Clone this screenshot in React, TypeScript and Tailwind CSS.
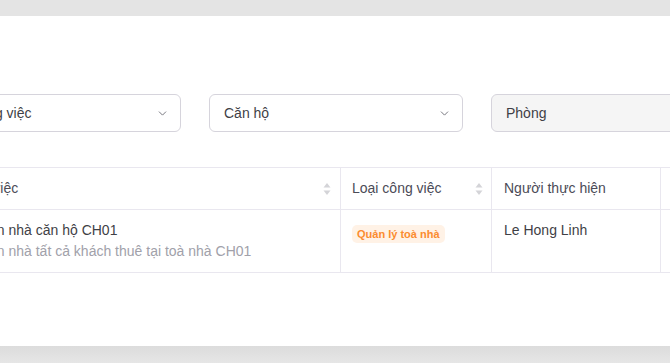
import { ChevronDown } from 'lucide-react';

function SortIcon() {
  return (
    <svg width="8" height="14" viewBox="0 0 8 14" className="shrink-0">
      <path d="M4 1 L7.5 5.5 H0.5 Z" fill="#d4d4d8" />
      <path d="M4 13 L7.5 8.5 H0.5 Z" fill="#d4d4d8" />
    </svg>
  );
}

function Select({ label, disabled }: { label: string; disabled?: boolean }) {
  return (
    <div
      className={`w-[254px] h-[38px] shrink-0 rounded-[6px] border border-[#d6d4dc] flex items-center justify-between pl-[14px] pr-[11px] ${
        disabled ? 'bg-[#f5f5f5]' : 'bg-white'
      }`}
    >
      <span className="text-[14px] text-[#3f3f46]">{label}</span>
      {!disabled && <ChevronDown size={13} strokeWidth={1.75} className="text-[#71717a]" />}
    </div>
  );
}

export default function App() {
  return (
    <div
      className="w-[670px] h-[363px] bg-[#e4e4e4] flex flex-col overflow-hidden"
      style={{ fontFamily: '"Liberation Sans", Arial, sans-serif' }}
    >
      <div className="h-[16px] shrink-0" />
      <div className="h-[330px] bg-white overflow-hidden shrink-0">
        {/* filters */}
        <div className="flex gap-[28px] mt-[78px] -ml-[73px]">
          <Select label="Loại công việc" />
          <Select label="Căn hộ" />
          <Select label="Phòng" disabled />
        </div>

        {/* table */}
        <div className="mt-[35px] -ml-[56px] w-[800px] border-t border-b border-[#e9e7ef]">
          <div className="flex h-[42px] border-b border-[#e9e7ef] text-[14px] text-[#4b4b57]">
            <div className="w-[397px] shrink-0 flex items-center justify-between pl-[12px] pr-[9px] border-r border-[#e9e7ef]">
              <span>Công việc</span>
              <SortIcon />
            </div>
            <div className="w-[151px] shrink-0 flex items-center justify-between pl-[11px] pr-[8px] border-r border-[#e9e7ef]">
              <span>Loại công việc</span>
              <SortIcon />
            </div>
            <div className="w-[169px] shrink-0 flex items-center pl-[12px] border-r border-[#e9e7ef]">
              <span>Người thực hiện</span>
            </div>
            <div className="flex-1" />
          </div>
          <div className="flex h-[62px] text-[14px]">
            <div className="w-[397px] shrink-0 pl-[10px] pt-[10px] border-r border-[#e9e7ef] leading-[20px]">
              <div className="text-[#3f3f46]">Thu tiền nhà căn hộ CH01</div>
              <div className="text-[#a1a1aa] mt-[1px]">Thu tiền nhà tất cả khách thuê tại toà nhà CH01</div>
            </div>
            <div className="w-[151px] shrink-0 pl-[11px] pt-[13px] border-r border-[#e9e7ef]">
              <span className="inline-block rounded-[5px] bg-[#fff2e6] text-[#fb8c2f] text-[11px] font-bold px-[5px] leading-[18px]">
                Quản lý toà nhà
              </span>
            </div>
            <div className="w-[169px] shrink-0 pl-[12px] pt-[10px] border-r border-[#e9e7ef] leading-[20px] text-[#3f3f46]">
              Le Hong Linh
            </div>
            <div className="flex-1" />
          </div>
        </div>
      </div>
      <div className="flex-1 bg-gradient-to-b from-[#dcdcdc] to-[#e6e6e6]" />
    </div>
  );
}
